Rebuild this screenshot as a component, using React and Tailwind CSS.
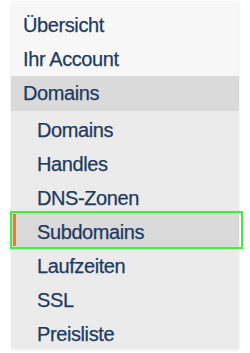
const topItems = ["Übersicht", "Ihr Account"];
const subItems = ["Domains", "Handles", "DNS-Zonen", "Subdomains", "Laufzeiten", "SSL", "Preisliste"];

export default function App() {
  return (
    <div className="min-h-[353px] bg-white pt-[2px] pl-[11px] font-['Liberation_Sans',Arial,sans-serif] text-[20px] tracking-[-0.4px] text-[#1e3a62] [-webkit-text-stroke:0.25px_#1e3a62]">
      <nav className="w-[228px] bg-[#f7f7f7] pt-[6px] pb-[1px] shadow-[0_0_2px_rgba(0,0,0,0.12)]">
        {topItems.map((label) => (
          <div key={label} className="h-[34px] pl-[12px] leading-[34px]">
            {label}
          </div>
        ))}
        <div className="h-[35px] bg-[#dadada] pl-[12px] leading-[34px]">Domains</div>
        <div className="bg-[#ebebeb]">
          {subItems.map((label) => {
            const active = label === "Subdomains";
            return (
              <div
                key={label}
                className={
                  active
                    ? "relative h-[34px] bg-[#dadada] pt-[4px] pl-[26px] leading-[30px]"
                    : "h-[34px] pt-[4px] pl-[26px] leading-[30px]"
                }
              >
                {active && (
                  <>
                    <span className="absolute left-[2px] top-[1px] bottom-[1px] w-[3px] bg-[#f47a20]" />
                    <span className="absolute -left-[1px] -right-[4px] -top-[2px] -bottom-[2px] border-2 border-[#3cf03c]" />
                  </>
                )}
                {label}
              </div>
            );
          })}
        </div>
      </nav>
    </div>
  );
}
